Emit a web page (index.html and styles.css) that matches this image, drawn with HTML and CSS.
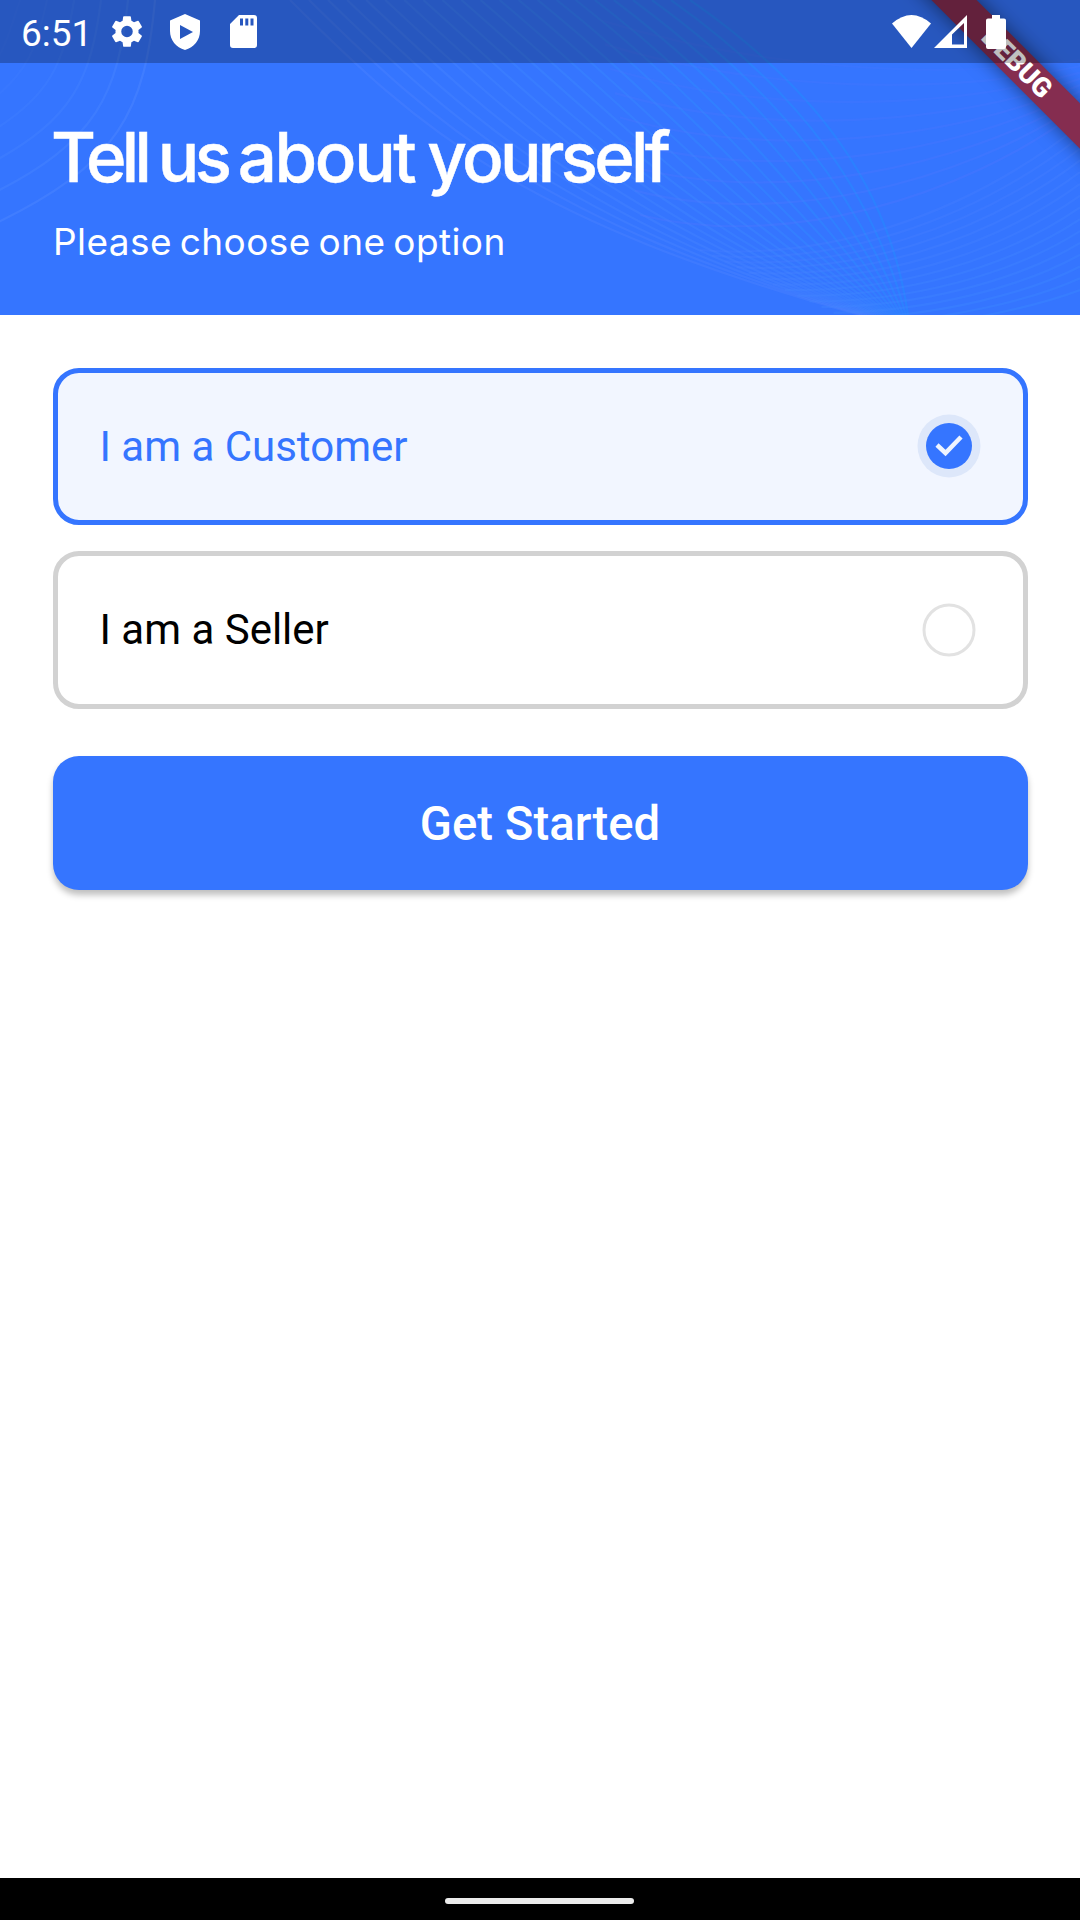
FILE: index.html
```html
<!DOCTYPE html>
<html lang="en">
<head>
<meta charset="utf-8">
<title>Tell us about yourself</title>
<link rel="stylesheet" href="styles.css">
</head>
<body>
<div class="screen">
  <header class="hero">
    <svg class="waves" id="waves" viewBox="0 0 1080 315" aria-hidden="true"></svg>
    <div class="ribbon-clip"><div class="ribbon">DEBUG</div></div>
    <div class="status">
      <span class="clock">6:51</span>
      <svg class="gear" viewBox="2 2 20 20"><path d="M19.14 12.94c.04-.3.06-.61.06-.94 0-.32-.02-.64-.07-.94l2.03-1.58a.49.49 0 0 0 .12-.61l-1.92-3.32a.49.49 0 0 0-.59-.22l-2.39.96c-.5-.38-1.03-.7-1.62-.94l-.36-2.54a.48.48 0 0 0-.48-.41h-3.84a.47.47 0 0 0-.47.41l-.36 2.54c-.59.24-1.13.57-1.62.94l-2.39-.96a.48.48 0 0 0-.59.22L2.74 8.87a.48.48 0 0 0 .12.61l2.03 1.58c-.05.3-.09.63-.09.94s.02.64.07.94l-2.03 1.58a.49.49 0 0 0-.12.61l1.92 3.32c.12.22.37.29.59.22l2.39-.96c.5.38 1.03.7 1.62.94l.36 2.54c.05.24.24.41.48.41h3.84c.24 0 .44-.17.47-.41l.36-2.54c.59-.24 1.13-.56 1.62-.94l2.39.96c.22.08.47 0 .59-.22l1.92-3.32a.47.47 0 0 0-.12-.61zM12 15.6A3.6 3.6 0 1 1 12 8.4a3.6 3.6 0 0 1 0 7.2z"/></svg>
      <svg class="shield" viewBox="0 0 30 36"><path fill-rule="evenodd" d="M15 0 30 6.500V17C30 26 24 33.500 15 36 6 33.500 0 26 0 17V6.500ZM10 11V25L23 18Z"/></svg>
      <svg class="sd" viewBox="0 0 27 33"><path fill-rule="evenodd" d="M9 0H24Q27 0 27 3V30Q27 33 24 33H3Q0 33 0 30V9ZM10 3.500V10.500H13V3.500ZM15.300 3.500V10.500H18.300V3.500ZM20.500 3.500V10.500H23.500V3.500Z"/></svg>
      <span class="spacer"></span>
      <svg class="wifi" viewBox="0 0 39 33"><path d="M0 8.500Q19.500-8.500 39 8.500L19.500 33Z"/></svg>
      <svg class="signal" viewBox="0 0 33 33"><path fill-rule="evenodd" d="M33 0V33H0ZM30 8 18 19.500V29.500H30Z"/></svg>
      <svg class="battery" viewBox="0 0 20 34"><path d="M6 0H14V3.500H18Q20 3.500 20 5.500V32Q20 34 18 34H2Q0 34 0 32V5.500Q0 3.500 2 3.500H6Z"/></svg>
    </div>
    <div class="intro">
      <h1 class="title"><span class="tight">Tell us </span><span class="loose">about </span>yourself</h1>
      <p class="subtitle">Please choose one option</p>
    </div>
  </header>
  <main class="content">
    <div class="option selected">
      <span>I am a Customer</span>
      <svg class="mark" viewBox="0 0 64 64"><circle cx="32" cy="32" r="31.500" fill="#dde7fa"/><circle cx="32" cy="32" r="23" fill="#3575ff"/><path d="M20 31 28.500 39 44 23" fill="none" stroke="#eef4ff" stroke-width="4.500"/></svg>
    </div>
    <div class="option">
      <span class="label">I am a Seller</span>
      <svg class="mark" viewBox="0 0 64 64"><circle cx="32" cy="32" r="25" fill="#fff" stroke="#e2e2e2" stroke-width="3"/></svg>
    </div>
    <button class="start" type="button">Get Started</button>
  </main>
  <footer class="nav"><span class="handle"></span></footer>
</div>
<script src="waves.js"></script>
</body>
</html>
```
FILE: styles.css
```css
* { box-sizing: border-box; }
body { margin: 0; font-family: Roboto, sans-serif; background: #fff; }
.screen { width: 1080px; height: 1920px; display: flex; flex-direction: column; overflow: hidden; }
.hero { position: relative; height: 315px; background: #3575ff; overflow: hidden; flex: none; }
.waves { position: absolute; inset: 0; width: 1080px; height: 315px; }
.waves path { fill: none; stroke-width: 2.2; }
.ribbon-clip { position: absolute; top: 0; right: 0; width: 240px; height: 200px; overflow: hidden; }
.ribbon { position: absolute; left: 42px; top: 47px; width: 270px; height: 32px; line-height: 32px; transform: rotate(45deg); background: #852d50; color: #fff; font-size: 27px; font-weight: 900; text-align: center; box-shadow: 0 0 20px rgba(0,0,0,.5); }
.status { position: relative; height: 63px; padding: 0 74px 0 21px; display: flex; align-items: center; background: rgba(0,0,0,.25); color: #fff; }
.status svg { fill: #fff; flex: none; }
.clock { width: 90px; font-size: 37px; line-height: 63px; padding-top: 3px; }
.gear { width: 32px; height: 33px; }
.shield { width: 30px; height: 36px; margin-left: 27px; }
.sd { width: 27px; height: 33px; margin-left: 30px; }
.spacer { flex: 1; }
.wifi { width: 39px; height: 33px; margin-right: 3px; }
.signal { width: 33px; height: 33px; margin-right: 19px; }
.battery { width: 20px; height: 34px; }
.intro { position: relative; padding: 52px 51px 0; color: #fff; font-family: Inter, sans-serif; }
.title { margin: 0; font-size: 69px; line-height: 84px; font-weight: 500; letter-spacing: -3.7px; word-spacing: -3px; white-space: nowrap; -webkit-text-stroke: .5px #fff; }
.tight { letter-spacing: -4.7px; }
.loose { letter-spacing: -2.4px; }
.subtitle { margin: 19px 0 0 2px; font-size: 37px; line-height: 48px; font-weight: 400; letter-spacing: .42px; word-spacing: -3px; white-space: nowrap; }
.content { flex: 1; padding: 52.5px 52.5px 0; display: flex; flex-direction: column; }
.option { height: 157.500px; margin-bottom: 26.250px; padding: 0 42px; border: 5.250px solid #d2d2d2; border-radius: 26px; display: flex; align-items: center; justify-content: space-between; font-size: 42px; color: #000; }
.label { padding-bottom: 2px; }
.selected { border-color: #3575ff; background: #f2f6ff; color: #3575ff; }
.mark { width: 64px; height: 64px; }
.start { margin-top: 21px; height: 134px; padding: 2px 0 0; border: 0; border-radius: 26px; background: #3575ff; color: #fff; font: 500 47.250px Roboto, sans-serif; box-shadow: 0 5px 6px rgba(0,0,0,.25); }
.nav { height: 42px; background: #000; display: flex; justify-content: center; align-items: center; padding: 4px 2px 0 0; flex: none; }
.handle { width: 189px; height: 6px; border-radius: 3px; background: #ebebeb; }
```
FILE: waves.js
```js
// Each family blends from one cubic curve to another.
const families = [
  { from: [290, 0, 420, 130, 520, 220, 860, 315], to: [690, 0, 820, 90, 890, 190, 908, 315], n: 22, a: [90, 140, 255, 0.25], b: [30, 145, 255, 0.4] },
  { from: [600, 20, 760, 70, 940, 80, 1080, 60], to: [640, 215, 780, 250, 960, 200, 1080, 110], n: 9, a: [100, 120, 255, 0.1], b: [90, 120, 255, 0.25] },
  { from: [700, 250, 820, 260, 960, 220, 1080, 125], to: [870, 330, 960, 325, 1040, 305, 1080, 290], n: 15, a: [80, 130, 255, 0.25], b: [60, 140, 255, 0.35] },
  { from: [20, 0, 10, 30, 5, 50, -10, 70], to: [155, 0, 145, 110, 120, 165, -10, 226], n: 6, a: [70, 135, 255, 0.12], b: [85, 140, 255, 0.35] }
];
const svg = document.getElementById("waves");
const mix = (p, q, t) => p.map((v, i) => v + (q[i] - v) * t);
for (const f of families) {
  for (let i = 0; i < f.n; i++) {
    const t = i / (f.n - 1);
    const p = mix(f.from, f.to, t);
    const path = document.createElementNS("http://www.w3.org/2000/svg", "path");
    path.setAttribute("d", `M${p[0]} ${p[1]}C${p.slice(2).join(" ")}`);
    path.setAttribute("stroke", `rgba(${mix(f.a, f.b, t).join(",")})`);
    svg.appendChild(path);
  }
}
```
